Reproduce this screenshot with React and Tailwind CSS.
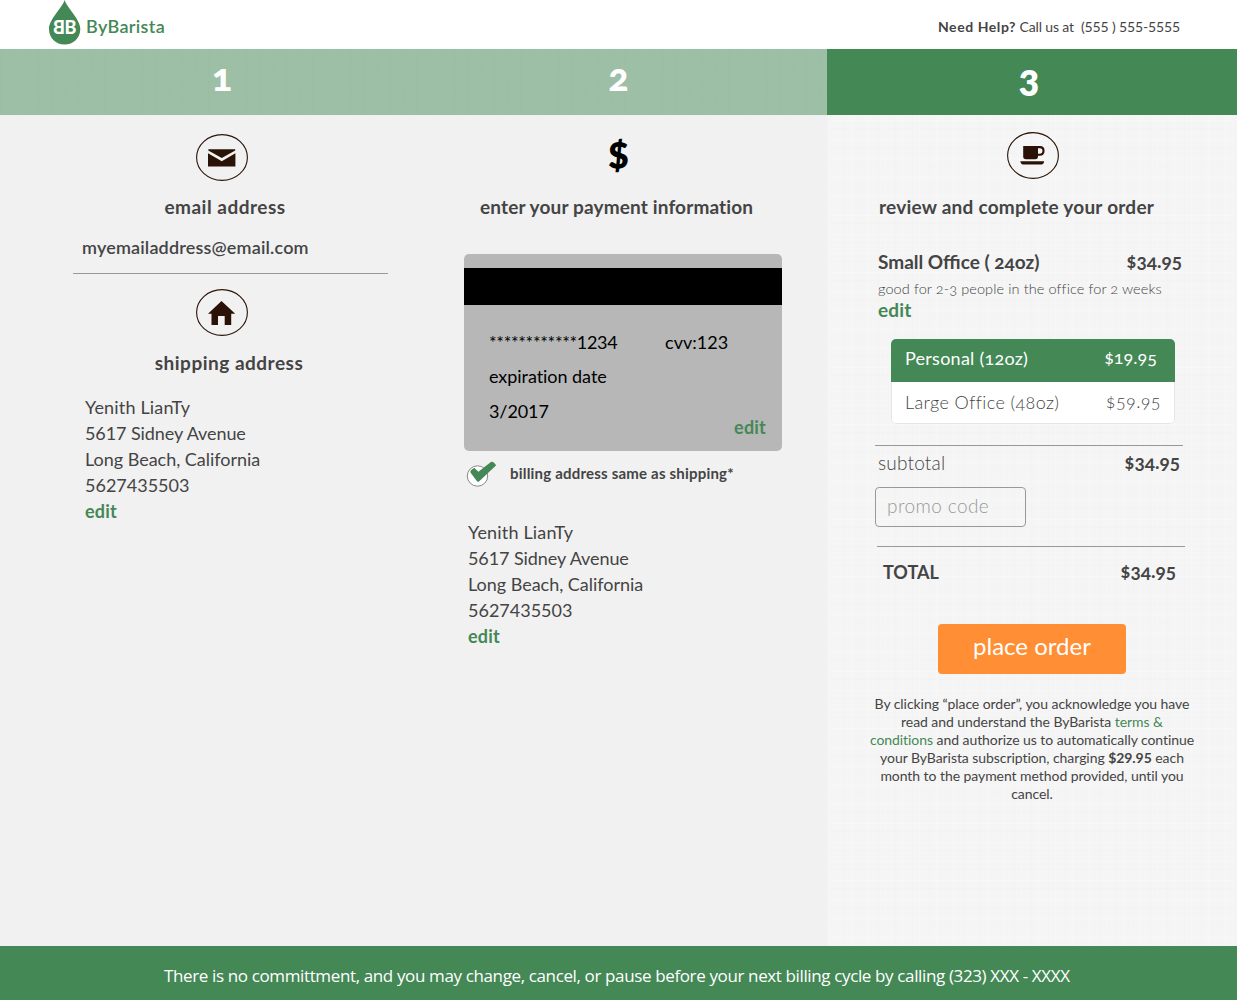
import React from 'react';

const LINEN =
  'bg-[repeating-linear-gradient(90deg,rgba(120,120,110,0.014)_0_1px,transparent_1px_7px,rgba(255,255,255,0.22)_7px_8px,transparent_8px_17px),repeating-linear-gradient(0deg,rgba(120,120,110,0.014)_0_1px,transparent_1px_8px,rgba(255,255,255,0.25)_8px_9px,transparent_9px_19px)]';
const LINEN_GREEN =
  'bg-[repeating-linear-gradient(90deg,rgba(60,110,80,0.02)_0_1px,transparent_1px_13px),repeating-linear-gradient(0deg,rgba(60,110,80,0.02)_0_1px,transparent_1px_11px)]';

function IconCircle({ className, children }) {
  return (
    <svg className={`block h-[47px] w-[52px] ${className}`} viewBox="0 0 52 47">
      <ellipse cx="26" cy="23.5" rx="25.4" ry="22.9" fill="none" stroke="#2a1306" strokeWidth="1.1" />
      {children}
    </svg>
  );
}

function Address({ className }) {
  return (
    <address className={`whitespace-nowrap text-[18px] leading-[26px] not-italic ${className}`}>
      <div className="tracking-[0.17px]">Yenith LianTy</div>
      <div className="tracking-[-0.08px]">5617 Sidney Avenue</div>
      <div className="tracking-[-0.02px]">Long Beach, California</div>
      <div>5627435503</div>
      <div className="font-bold tracking-[0.2px] text-[#448856]">edit</div>
    </address>
  );
}

function Logo() {
  return (
    <div className="flex h-[49px] items-start pl-[48px]">
      <div className="relative h-[45px] w-[33px]">
        <svg className="block h-[45px] w-[33px]" viewBox="0 0 33 45">
          <path d="M16.6 0C19 8 32.3 19 32.3 29C32.3 38.2 25.2 44.6 16.6 44.6C8 44.6 1 38.2 1 29C1 19 14.2 8 16.6 0Z" fill="#448856" />
        </svg>
        <div className="absolute left-[5.5px] top-[17px] flex text-[18px] font-black leading-[20px] text-white">
          <span className="block w-[11px] scale-x-[-1]">B</span>
          <span className="block w-[11px]">B</span>
        </div>
      </div>
      <span className="ml-[5px] mt-[13px] text-[18px] font-semibold leading-[26px] tracking-[0.35px] text-[#448856]">ByBarista</span>
    </div>
  );
}

export default function App() {
  return (
    <div className="flex h-[1000px] w-[1237px] flex-col overflow-hidden bg-white font-['Lato',sans-serif] text-[#444]">
      <header className="flex h-[49px] justify-between">
        <Logo />
        <p className="mr-[57px] mt-[17px] whitespace-pre text-[14px] leading-[20px]">
          <b className="tracking-[0.57px]">Need Help?</b>
          <span className="tracking-[-0.13px]"> Call us at  (555 ) 555-5555</span>
        </p>
      </header>

      <nav className="flex h-[66px] text-white">
        <div className={`flex w-[827px] bg-[#9dbfa6] ${LINEN_GREEN}`}>
          <div className="w-[444px] pt-[5px] text-center text-[38px] font-black leading-[44px] oldstyle-nums">1</div>
          <div className="w-[349px] pt-[5px] text-center text-[38px] font-black leading-[44px] oldstyle-nums">2</div>
        </div>
        <div className="w-[410px] bg-[#448856] pr-[6px] pt-[11px] text-center text-[35px] font-extrabold leading-[44px]">3</div>
      </nav>

      <main className="flex h-[831px]">
        <section className="w-[444px] bg-[#f1f1f1]">
          <IconCircle className="ml-[196px] mt-[19px]">
            <path d="M12.3 15.2H39.2V16.6L25.8 24L12.3 16.6Z" fill="#2a1306" />
            <path d="M12 19.2L25.8 27.2L39.4 19.2V32.4H12Z" fill="#2a1306" />
          </IconCircle>
          <h2 className="ml-[3px] mt-[13px] w-[444px] text-center text-[19px] font-bold leading-[26px] tracking-[0.5px]">email address</h2>
          <p className="ml-[82px] mt-[14px] text-[18px] font-semibold leading-[26px] tracking-[0.17px]">myemailaddress@email.com</p>
          <hr className="ml-[73px] mt-[13px] w-[315px] border-[#999]" />
          <IconCircle className="ml-[196px] mt-[15px]">
            <path d="M25.5 12L39.2 24.8H35.2V36H28.7V27H22V36H15.5V24.8H12Z" fill="#2a1306" />
          </IconCircle>
          <h2 className="ml-[7px] mt-[14px] w-[444px] text-center text-[19px] font-bold leading-[26px] tracking-[0.5px]">shipping address</h2>
          <Address className="ml-[85px] mt-[18px]" />
        </section>

        <section className="w-[383px] bg-[#f1f1f1] pl-[20px]">
          <div className="w-[309px] pt-[16px] text-center text-[35px] font-extrabold leading-[46px] text-black">$</div>
          <h2 className="ml-[16px] mt-[17px] whitespace-nowrap text-[19px] font-bold leading-[26px] tracking-[0.15px]">enter your payment information</h2>
          <div className="mt-[34px] h-[197px] w-[318px] overflow-hidden rounded-[5px] bg-[#b7b7b7] text-[18px] text-black">
            <div className="mt-[14px] h-[37px] bg-black" />
            <div className="ml-[25px] mt-[24px] flex leading-[26px]">
              <span className="w-[176px] tracking-[-0.33px]">************1234</span>
              <span className="tracking-[0.05px]">cvv:123</span>
            </div>
            <div className="ml-[25px] mt-[8px] leading-[26px] tracking-[-0.05px]">expiration date</div>
            <div className="ml-[25px] mt-[9px] leading-[26px] tracking-[-0.1px]">3/2017</div>
            <div className="-mt-[10px] mr-[16px] text-right font-bold leading-[26px] tracking-[0.2px] text-[#448856]">edit</div>
          </div>
          <label className="flex h-[48px] items-start">
            <svg className="ml-[2px] mt-[9px] block h-[28px] w-[32px]" viewBox="0 0 32 28">
              <circle cx="11.5" cy="16" r="10.2" fill="#fff" stroke="#888" strokeWidth="1" />
              <path d="M5 10.2L8.2 7.8L12.4 11.8L25.2 1.8Q26.6 1.4 27.8 2.6L30.2 5.2L13 21.6Q12 22.2 11 21.2L4.6 12.8Q3.8 11.4 5 10.2Z" fill="#448856" />
            </svg>
            <span className="ml-[12px] mt-[12px] whitespace-nowrap text-[15px] font-bold leading-[20px] tracking-[0.2px]">billing address same as shipping*</span>
          </label>
          <Address className="ml-[4px] mt-[20px]" />
        </section>

        <section className={`w-[410px] bg-[#f5f5f5] ${LINEN}`}>
          <IconCircle className="ml-[180px] mt-[17px]">
            <path d="M16.2 14H31V24.5Q31 27.3 28.2 27.3H19Q16.2 27.3 16.2 24.5Z" fill="#2a1306" />
            <path d="M30.5 15.1H33Q36.5 15.1 36.5 18.7Q36.5 22.6 32.8 22.8L30.5 22.8" fill="none" stroke="#2a1306" strokeWidth="2.1" />
            <path d="M13.3 29.3H37.2Q36.8 32.4 34.5 32.4H16Q13.8 32.4 13.3 29.3Z" fill="#2a1306" />
          </IconCircle>
          <h2 className="ml-[52px] mt-[15px] whitespace-nowrap text-[19px] font-bold leading-[26px] tracking-[0.24px]">review and complete your order</h2>

          <div className="ml-[51px] mr-[55px] mt-[29px] flex justify-between text-[19px] font-bold leading-[26px] oldstyle-nums">
            <span>Small Office ( 24oz)</span>
            <span className="-mt-px">$34.95</span>
          </div>
          <p className="ml-[51px] mt-[4px] whitespace-nowrap text-[14.5px] font-light leading-[20px] tracking-[0.1px] oldstyle-nums">good for 2-3 people in the office for 2 weeks</p>
          <p className="ml-[51px] -mt-[2px] text-[19px] font-bold leading-[26px] tracking-[0.2px] text-[#448856]">edit</p>

          <ul className="ml-[64px] mt-[16px] h-[85px] w-[284px] overflow-hidden rounded-[5px] text-[18px] oldstyle-nums">
            <li className="flex h-[43px] justify-between bg-[#448856] pl-[14px] pr-[18px] pt-[6px] leading-[26px] text-white">
              <span className="tracking-[0.25px]">Personal (12oz)</span>
              <span className="-mt-px">$19.95</span>
            </li>
            <li className="flex h-[42px] justify-between rounded-b-[5px] border border-t-0 border-[#e6e6e6] bg-white pl-[13px] pr-[13px] pt-[7px] font-light leading-[26px]">
              <span className="tracking-[0.4px]">Large Office (48oz)</span>
              <span className="-mt-px tracking-[0.4px]">$59.95</span>
            </li>
          </ul>

          <div className="ml-[48px] mt-[21px] flex w-[308px] justify-between border-t border-[#999] pl-[3px] pr-[3px] pt-[4px] text-[19px] leading-[26px] oldstyle-nums">
            <span className="font-light tracking-[0.2px]">subtotal</span>
            <span className="-mt-px font-bold">$34.95</span>
          </div>
          <div className="ml-[48px] mt-[11px] h-[40px] w-[151px] rounded-[4px] border border-[#999] pl-[11px] pt-[5px] text-[19px] font-light leading-[26px] tracking-[0.4px] text-[#999]">promo code</div>
          <div className="ml-[50px] mt-[19px] flex w-[308px] justify-between border-t border-[#999] pl-[6px] pr-[9px] pt-[12px] text-[19px] font-bold leading-[26px] oldstyle-nums">
            <span className="text-[18px]">TOTAL</span>
            <span className="-mt-px">$34.95</span>
          </div>

          <button className="ml-[111px] mt-[39px] block h-[50px] w-[188px] rounded-[4px] bg-[#ff8e34] pb-[7px] text-[24px] leading-[30px] text-white">place order</button>
          <p className="ml-[30px] mt-[21px] w-[350px] text-center text-[14px] leading-[18px] tracking-[-0.06px]">
            By clicking “place order”, you acknowledge you have<br />
            read and understand the ByBarista <span className="text-[#448856]">terms &amp;</span><br />
            <span className="text-[#448856]">conditions</span> and authorize us to automatically continue<br />
            your ByBarista subscription, charging <b>$29.95</b> each<br />
            month to the payment method provided, until you<br />
            cancel.
          </p>
        </section>
      </main>

      <footer className="h-[54px] whitespace-nowrap bg-[#448856] pl-[164px] pt-[17px] font-['Open_Sans',sans-serif] text-[17px] leading-[26px] tracking-[-0.37px] text-white">
        There is no committment, and you may change, cancel, or pause before your next billing cycle by calling (323) XXX - XXXX
      </footer>
    </div>
  );
}
